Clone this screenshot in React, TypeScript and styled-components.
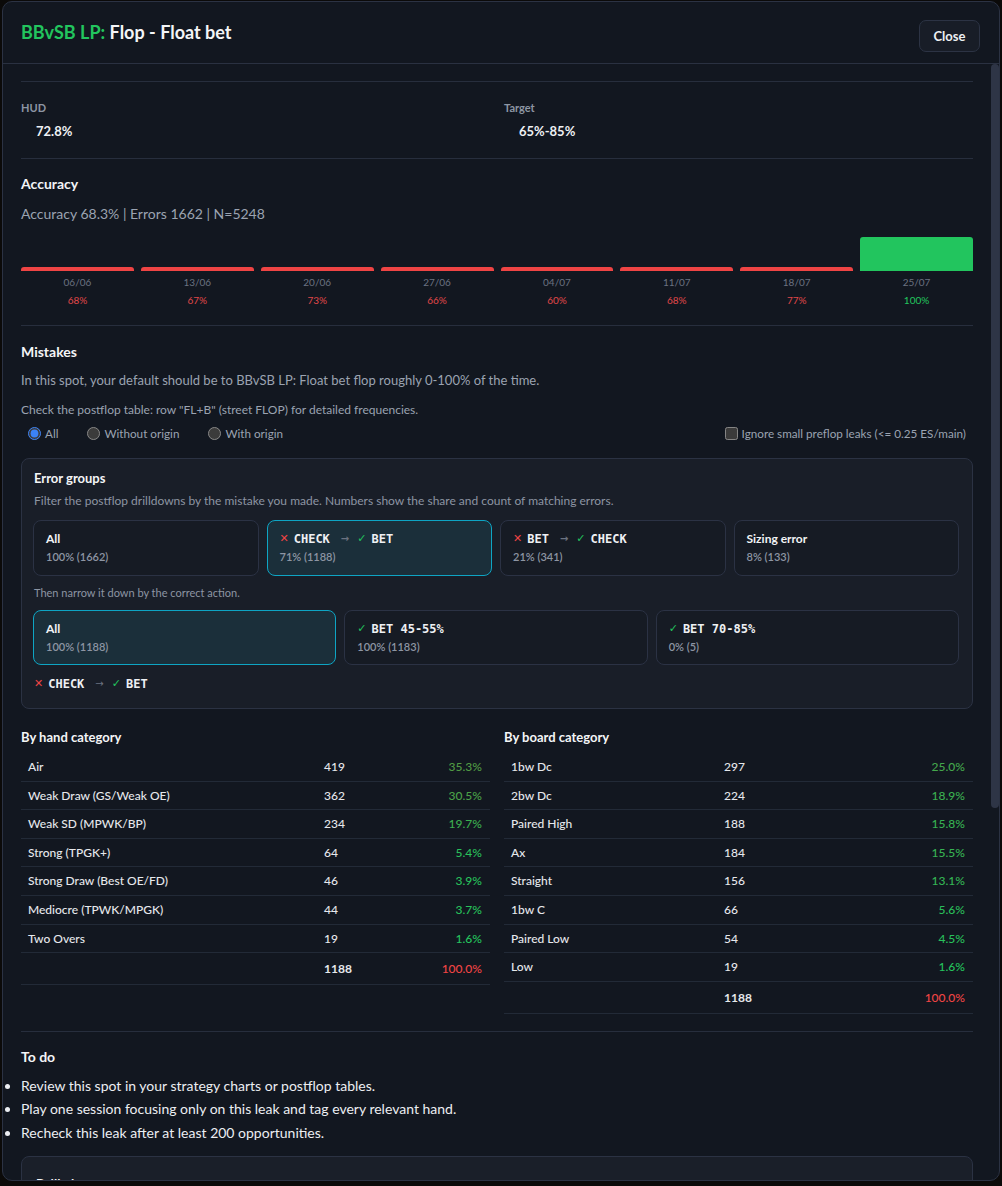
import React from "react";
import styled, { createGlobalStyle } from "styled-components";

const GlobalStyle = createGlobalStyle`
  html, body { margin: 0; padding: 0; background: #0b0a09; }
  body { font-family: Lato, "Noto Sans", sans-serif; color: #eceef2; }
  * { box-sizing: border-box; }
`;

const Page = styled.div`
  padding: 1px 2px 5px 2px;
`;

const Modal = styled.div`
  width: 998px;
  height: 1180px;
  display: flex;
  flex-direction: column;
  background: #121720;
  border: 1px solid #2b3243;
  border-radius: 10px;
  overflow: hidden;
`;

const Header = styled.header`
  display: flex;
  justify-content: space-between;
  align-items: flex-start;
  padding: 18px 19px 11px 18px;
  border-bottom: 1px solid #2a3141;
  flex-shrink: 0;
`;

const Title = styled.h1`
  margin: 0;
  font-size: 18px;
  line-height: 24px;
  font-weight: 700;
  color: #f4f5f7;
`;

const Accent = styled.span`
  color: #22c55e;
`;

const CloseButton = styled.button`
  height: 32px;
  width: 61px;
  border-radius: 7px;
  border: 1px solid #2c3344;
  background: #181d27;
  color: #eef0f3;
  font-family: inherit;
  font-size: 13px;
  font-weight: 700;
`;

const BodyRow = styled.div`
  flex: 1;
  min-height: 0;
  display: flex;
`;

const Body = styled.div`
  flex: 1;
  min-width: 0;
  overflow-y: auto;
  scrollbar-width: none;
  padding: 17px 18px 18px 18px;
  &::-webkit-scrollbar { display: none; }
`;

const ScrollTrack = styled.div`
  width: 8px;
  flex-shrink: 0;
`;

const ScrollThumb = styled.div`
  height: 744px;
  background: #2e3546;
  border-radius: 4px;
`;

const Section = styled.section<{ $pt: number; $pb: number }>`
  border-top: 1px solid #272e3d;
  padding: ${(p) => p.$pt}px 0 ${(p) => p.$pb}px;
`;

const TwoCols = styled.div<{ $gap: number }>`
  display: grid;
  grid-template-columns: 1fr 1fr;
  column-gap: ${(p) => p.$gap}px;
  align-items: start;
`;

const StatLabel = styled.div`
  font-size: 11px;
  line-height: 16px;
  font-weight: 700;
  color: #8d95a3;
`;

const StatValue = styled.div`
  margin-top: 6px;
  padding-left: 15px;
  font-size: 13px;
  line-height: 18px;
  font-weight: 700;
  color: #eef0f3;
`;

const SectionTitle = styled.h2`
  margin: 0;
  font-size: 14px;
  line-height: 20px;
  font-weight: 700;
  color: #f4f5f7;
`;

const Summary = styled.div`
  margin-top: 10px;
  font-size: 14px;
  line-height: 20px;
  color: #9ba3b1;
`;

const Chart = styled.div`
  display: grid;
  grid-template-columns: repeat(8, 1fr);
  gap: 7px;
  margin-top: 13px;
`;

const ChartCol = styled.div`
  display: flex;
  flex-direction: column;
  align-items: stretch;
  text-align: center;
`;

const BarArea = styled.div`
  height: 34px;
  display: flex;
  align-items: flex-end;
`;

const Bar = styled.div<{ $good: boolean }>`
  width: 100%;
  background: ${(p) => (p.$good ? "#22c55e" : "#ef4444")};
  border-radius: 3px 3px 0 0;
`;

const DateLabel = styled.div`
  margin-top: 4px;
  font-size: 10px;
  line-height: 14px;
  color: #6b7280;
`;

const PctLabel = styled.div<{ $good: boolean }>`
  margin-top: 4px;
  font-size: 10px;
  line-height: 14px;
  color: ${(p) => (p.$good ? "#22c55e" : "#e0484a")};
`;

const Paragraph = styled.p<{ $size: number; $mt: number }>`
  margin: ${(p) => p.$mt}px 0 0;
  font-size: ${(p) => p.$size}px;
  line-height: ${(p) => (p.$size >= 13 ? 20 : 18)}px;
  color: #9ba3b1;
`;

const FilterRow = styled.div`
  margin-top: 5px;
  display: flex;
  justify-content: space-between;
  align-items: center;
  padding: 0 7px;
  height: 18px;
`;

const RadioGroup = styled.div`
  display: flex;
  align-items: center;
  gap: 29px;
`;

const Option = styled.label`
  display: inline-flex;
  align-items: center;
  gap: 4px;
  font-size: 11.7px;
  line-height: 18px;
  color: #9ba3b1;
  input {
    margin: 0;
    width: 13px;
    height: 13px;
    color-scheme: dark;
    accent-color: #3b82f6;
  }
`;

const Panel = styled.div`
  margin-top: 16px;
  background: #191e28;
  border: 1px solid #2b3243;
  border-radius: 8px;
  padding: 10px 13px 15px 11px;
`;

const PanelTitle = styled.h3`
  margin: 0;
  padding-left: 1px;
  font-size: 13px;
  line-height: 18px;
  font-weight: 700;
  color: #f4f5f7;
`;

const SmallText = styled.p<{ $size: number; $mt: number }>`
  margin: ${(p) => p.$mt}px 0 0;
  padding-left: 1px;
  font-size: ${(p) => p.$size}px;
  line-height: ${(p) => (p.$size >= 12 ? 18 : 16)}px;
  color: #8d95a3;
`;

const CardGrid = styled.div<{ $cols: number; $mt: number }>`
  margin-top: ${(p) => p.$mt}px;
  display: grid;
  grid-template-columns: repeat(${(p) => p.$cols}, 1fr);
  gap: 8px;
`;

const Card = styled.div<{ $active?: boolean; $h: number }>`
  height: ${(p) => p.$h}px;
  display: flex;
  flex-direction: column;
  gap: 2px;
  padding: 10px 12px;
  border-radius: 8px;
  border: 1px solid ${(p) => (p.$active ? "#0ea5c4" : "#2b3244")};
  background: ${(p) => (p.$active ? "#1b2f3a" : "#161b24")};
`;

const CardTitle = styled.div`
  display: flex;
  align-items: center;
  font-size: 12px;
  line-height: 16px;
  font-weight: 700;
  color: #f1f3f5;
`;

const CardSub = styled.div`
  font-size: 11px;
  line-height: 16px;
  font-weight: 600;
  color: #8d95a3;
`;

const Mono = styled.span`
  font-family: "DejaVu Sans Mono", "Liberation Mono", monospace;
  font-weight: 700;
  font-size: 12px;
  color: #eef0f3;
  white-space: pre;
`;

const Mark = styled.span<{ $tone: "bad" | "good" | "arrow" }>`
  font-family: "DejaVu Sans", sans-serif;
  font-size: ${(p) => (p.$tone === "arrow" ? 10 : 11)}px;
  color: ${(p) => (p.$tone === "bad" ? "#ef4444" : p.$tone === "good" ? "#22c55e" : "#6b7280")};
  margin-right: ${(p) => (p.$tone === "arrow" ? 8 : 5)}px;
  margin-left: ${(p) => (p.$tone === "arrow" ? 11 : 0)}px;
`;

const MistakeLine = styled.div`
  margin-top: 10px;
  display: flex;
  align-items: center;
  line-height: 18px;
  padding-left: 1px;
`;

const TablesGrid = styled.div`
  margin-top: 19px;
  display: grid;
  grid-template-columns: 1fr 1fr;
  column-gap: 14px;
  align-items: start;
`;

const TableTitle = styled.h3`
  margin: 0 0 7px;
  font-size: 13px;
  line-height: 18px;
  font-weight: 700;
  color: #f4f5f7;
`;

const Row = styled.div<{ $cols: string; $total?: boolean }>`
  display: grid;
  grid-template-columns: ${(p) => p.$cols};
  align-items: center;
  padding: ${(p) => (p.$total ? "8px 8px 8px 7px" : "6px 8px 6px 7px")};
  line-height: ${(p) => (p.$total ? "15px" : "15.6px")};
  border-bottom: 1px solid #222a37;
  font-size: 12px;
  color: #e6e8ec;
`;

const Cell = styled.span<{ $bold?: boolean }>`
  font-weight: ${(p) => (p.$bold ? 700 : 500)};
`;

const PctCell = styled.span`
  text-align: right;
  font-weight: 500;
`;

const TodoList = styled.ul`
  margin: 7px 0 0;
  padding: 0;
  list-style: disc outside;
  li {
    font-size: 14px;
    line-height: 23.5px;
    color: #eceef2;
  }
`;

const NotesPanel = styled.div`
  margin-top: 12px;
  min-height: 563px;
  background: #1a1f29;
  border: 1px solid #2b3243;
  border-radius: 8px;
  padding: 18px 13px 12px;
`;

const chartData = [
  { d: "06/06", v: 68 },
  { d: "13/06", v: 67 },
  { d: "20/06", v: 73 },
  { d: "27/06", v: 66 },
  { d: "04/07", v: 60 },
  { d: "11/07", v: 68 },
  { d: "18/07", v: 77 },
  { d: "25/07", v: 100 },
];

const handRows = [
  ["Air", "419", 35.3],
  ["Weak Draw (GS/Weak OE)", "362", 30.5],
  ["Weak SD (MPWK/BP)", "234", 19.7],
  ["Strong (TPGK+)", "64", 5.4],
  ["Strong Draw (Best OE/FD)", "46", 3.9],
  ["Mediocre (TPWK/MPGK)", "44", 3.7],
  ["Two Overs", "19", 1.6],
] as const;

const boardRows = [
  ["1bw Dc", "297", 25.0],
  ["2bw Dc", "224", 18.9],
  ["Paired High", "188", 15.8],
  ["Ax", "184", 15.5],
  ["Straight", "156", 13.1],
  ["1bw C", "66", 5.6],
  ["Paired Low", "54", 4.5],
  ["Low", "19", 1.6],
] as const;

function greenTone(pct: number): string {
  const t = Math.min(pct / 38, 1);
  const a = [0x22, 0xc5, 0x5e];
  const b = [0x55, 0x98, 0x42];
  const c = a.map((v, i) => Math.round(v + (b[i] - v) * t));
  return `rgb(${c[0]}, ${c[1]}, ${c[2]})`;
}

function MistakeLabel({ wrong, right }: { wrong: string; right: string }) {
  return (
    <>
      <Mark $tone="bad">✕</Mark>
      <Mono>{wrong}</Mono>
      <Mark $tone="arrow">→</Mark>
      <Mark $tone="good">✓</Mark>
      <Mono>{right}</Mono>
    </>
  );
}

function CategoryTable({
  title,
  cols,
  rows,
}: {
  title: string;
  cols: string;
  rows: ReadonlyArray<readonly [string, string, number]>;
}) {
  return (
    <div>
      <TableTitle>{title}</TableTitle>
      {rows.map(([name, n, pct]) => (
        <Row key={name} $cols={cols}>
          <Cell>{name}</Cell>
          <Cell>{n}</Cell>
          <PctCell style={{ color: greenTone(pct) }}>{pct.toFixed(1)}%</PctCell>
        </Row>
      ))}
      <Row $cols={cols} $total>
        <Cell />
        <Cell $bold>1188</Cell>
        <PctCell style={{ color: "#ef4444" }}>100.0%</PctCell>
      </Row>
    </div>
  );
}

export default function App() {
  return (
    <Page>
      <GlobalStyle />
      <Modal>
        <Header>
          <Title>
            <Accent>BBvSB LP:</Accent> Flop - Float bet
          </Title>
          <CloseButton>Close</CloseButton>
        </Header>
        <BodyRow>
          <Body>
            <Section $pt={18} $pb={18}>
              <TwoCols $gap={14}>
                <div>
                  <StatLabel>HUD</StatLabel>
                  <StatValue>72.8%</StatValue>
                </div>
                <div>
                  <StatLabel>Target</StatLabel>
                  <StatValue>65%-85%</StatValue>
                </div>
              </TwoCols>
            </Section>

            <Section $pt={15} $pb={18}>
              <SectionTitle>Accuracy</SectionTitle>
              <Summary>Accuracy 68.3% | Errors 1662 | N=5248</Summary>
              <Chart>
                {chartData.map((c) => (
                  <ChartCol key={c.d}>
                    <BarArea>
                      <Bar $good={c.v >= 85} style={{ height: c.v >= 85 ? 34 : 4 }} />
                    </BarArea>
                    <DateLabel>{c.d}</DateLabel>
                    <PctLabel $good={c.v >= 85}>{c.v}%</PctLabel>
                  </ChartCol>
                ))}
              </Chart>
            </Section>

            <Section $pt={16} $pb={17}>
              <SectionTitle>Mistakes</SectionTitle>
              <Paragraph $size={13} $mt={8}>
                In this spot, your default should be to BBvSB LP: Float bet flop roughly 0-100% of the time.
              </Paragraph>
              <Paragraph $size={12} $mt={11}>
                Check the postflop table: row "FL+B" (street FLOP) for detailed frequencies.
              </Paragraph>
              <FilterRow>
                <RadioGroup>
                  <Option>
                    <input type="radio" name="origin" defaultChecked />
                    All
                  </Option>
                  <Option>
                    <input type="radio" name="origin" />
                    Without origin
                  </Option>
                  <Option>
                    <input type="radio" name="origin" />
                    With origin
                  </Option>
                </RadioGroup>
                <Option>
                  <input type="checkbox" />
                  Ignore small preflop leaks (&lt;= 0.25 ES/main)
                </Option>
              </FilterRow>

              <Panel>
                <PanelTitle>Error groups</PanelTitle>
                <SmallText $size={12} $mt={5}>
                  Filter the postflop drilldowns by the mistake you made. Numbers show the share and count of matching errors.
                </SmallText>
                <CardGrid $cols={4} $mt={10}>
                  <Card $h={56}>
                    <CardTitle>All</CardTitle>
                    <CardSub>100% (1662)</CardSub>
                  </Card>
                  <Card $h={56} $active>
                    <CardTitle>
                      <MistakeLabel wrong="CHECK" right="BET" />
                    </CardTitle>
                    <CardSub>71% (1188)</CardSub>
                  </Card>
                  <Card $h={56}>
                    <CardTitle>
                      <MistakeLabel wrong="BET" right="CHECK" />
                    </CardTitle>
                    <CardSub>21% (341)</CardSub>
                  </Card>
                  <Card $h={56}>
                    <CardTitle>Sizing error</CardTitle>
                    <CardSub>8% (133)</CardSub>
                  </Card>
                </CardGrid>
                <SmallText $size={11} $mt={9}>
                  Then narrow it down by the correct action.
                </SmallText>
                <CardGrid $cols={3} $mt={9}>
                  <Card $h={55} $active>
                    <CardTitle>All</CardTitle>
                    <CardSub>100% (1188)</CardSub>
                  </Card>
                  <Card $h={55}>
                    <CardTitle>
                      <Mark $tone="good">✓</Mark>
                      <Mono>BET 45-55%</Mono>
                    </CardTitle>
                    <CardSub>100% (1183)</CardSub>
                  </Card>
                  <Card $h={55}>
                    <CardTitle>
                      <Mark $tone="good">✓</Mark>
                      <Mono>BET 70-85%</Mono>
                    </CardTitle>
                    <CardSub>0% (5)</CardSub>
                  </Card>
                </CardGrid>
                <MistakeLine>
                  <MistakeLabel wrong="CHECK" right="BET" />
                </MistakeLine>
              </Panel>

              <TablesGrid>
                <CategoryTable title="By hand category" cols="296px 1fr auto" rows={handRows} />
                <CategoryTable title="By board category" cols="213px 1fr auto" rows={boardRows} />
              </TablesGrid>
            </Section>

            <Section $pt={15} $pb={0}>
              <SectionTitle>To do</SectionTitle>
              <TodoList>
                <li>Review this spot in your strategy charts or postflop tables.</li>
                <li>Play one session focusing only on this leak and tag every relevant hand.</li>
                <li>Recheck this leak after at least 200 opportunities.</li>
              </TodoList>
              <NotesPanel>
                <PanelTitle>Drill plan</PanelTitle>
                <SmallText $size={12} $mt={5}>
                  Track how this leak evolves over your next sessions.
                </SmallText>
              </NotesPanel>
            </Section>
          </Body>
          <ScrollTrack>
            <ScrollThumb />
          </ScrollTrack>
        </BodyRow>
      </Modal>
    </Page>
  );
}
